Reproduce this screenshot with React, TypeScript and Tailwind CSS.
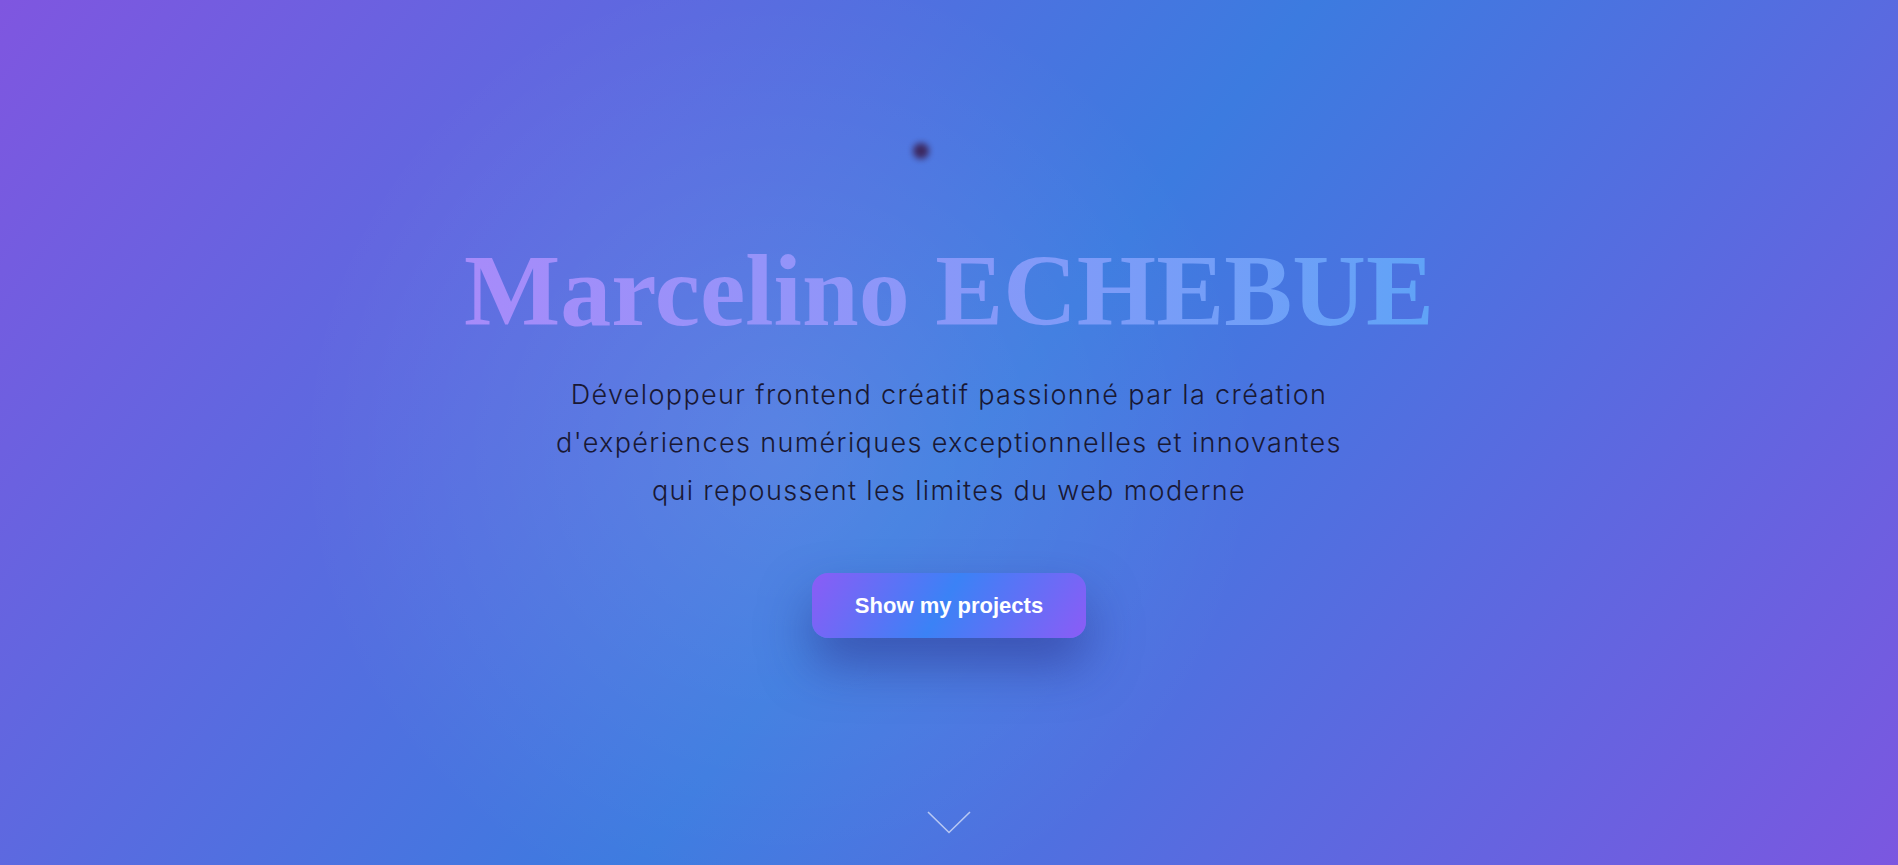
export default function App() {
  return (
    <div className="relative min-h-screen w-full overflow-hidden bg-[radial-gradient(circle_at_41%_52%,rgba(255,255,255,0.1),rgba(255,255,255,0)_40%),linear-gradient(128deg,#7f56e0_0%,#3c7be0_51%,#7b57e0_100%)]">
      {/* cursor dot */}
      <div className="absolute left-[913px] top-[143px] w-[16px] h-[16px] rounded-full bg-[#3a1f52] blur-[3px] opacity-90" />

      <main className="flex min-h-screen flex-col items-center justify-center pt-[13px] text-center">
        <h1
          className="bg-gradient-to-r from-[#a78bfa] to-[#5fa3f7] bg-clip-text text-[102px] font-bold leading-none text-transparent"
          style={{ fontFamily: '"Liberation Serif", "DejaVu Serif", serif' }}
        >
          Marcelino ECHEBUE
        </h1>

        <p
          className="mt-[29px] max-w-[830px] text-[27px] font-light leading-[48px] tracking-[0.05em] text-[#191834]"
          style={{ fontFamily: 'Inter, "Noto Sans", sans-serif' }}
        >
          Développeur frontend créatif passionné par la création d'expériences numériques exceptionnelles et innovantes qui repoussent les limites du web moderne
        </p>

        <button
          className="mt-[58px] rounded-2xl bg-[linear-gradient(120deg,#8b5cf6_0%,#3b82f6_48%,#8b5cf6_100%)] px-[43px] py-4 text-[22px] font-bold leading-[33px] text-white shadow-[0_26px_50px_rgba(40,40,130,0.5)]"
          style={{ fontFamily: '"Liberation Sans", Arial, sans-serif' }}
        >
          Show my projects
        </button>
      </main>

      {/* scroll hint */}
      <div className="absolute bottom-[31px] left-1/2 -translate-x-1/2">
        <svg width="44" height="23" viewBox="0 0 44 23" fill="none">
          <polyline points="1,1 22,21.5 43,1" stroke="rgba(255,255,255,0.6)" strokeWidth="1.6" />
        </svg>
      </div>
    </div>
  )
}
